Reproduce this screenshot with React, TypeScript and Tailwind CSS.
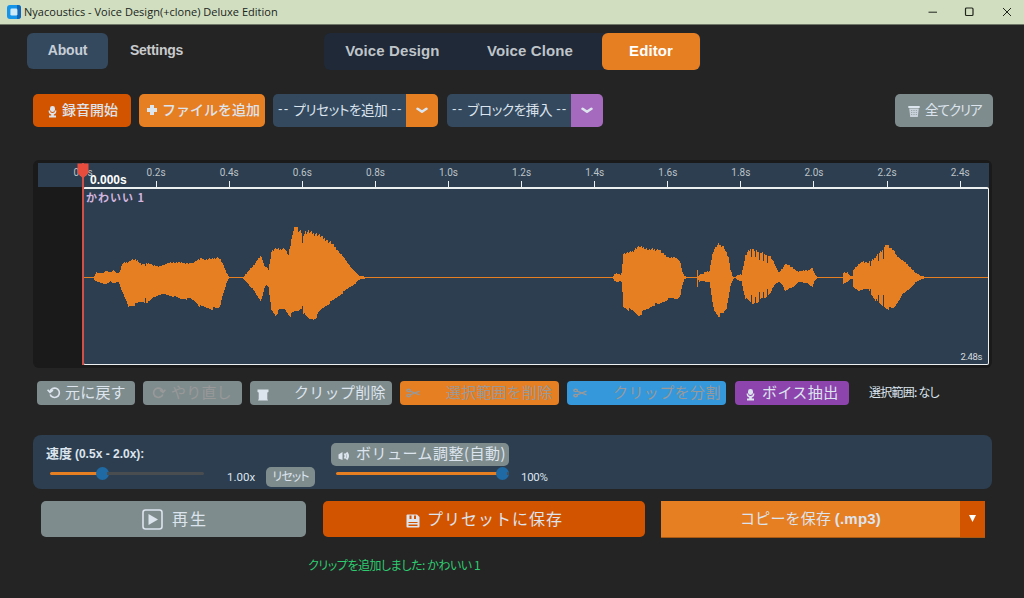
import type { ReactNode } from 'react';

type Sample = [x: number, up: number, down: number];

// Envelope of the clip: position inside the clip, height above and below the zero line
const envelope: Sample[] = [
  [0, 0, 0], [10, 0, 0], [11, 2, 2], [13, 5, 4], [16, 4, 5], [20, 5, 6], [23, 7, 6], [27, 5, 4], [30, 7, 6],
  [35, 4, 4], [36.5, 6, 8], [39, 14, 15], [42, 15, 22], [45, 16, 29], [50, 18, 27], [54, 17, 26], [58, 13, 24],
  [62, 14, 25], [66, 14, 24], [70, 12, 20], [75, 11, 17], [81, 13, 17], [87, 15, 18], [97, 15, 21], [107, 14, 21],
  [112, 16, 24], [117, 19, 29], [123, 18, 30], [129, 19, 31], [135, 20, 31], [137, 18, 27], [139, 14, 18],
  [141, 10, 12], [143, 5, 6], [146, 0, 0],
  [159, 0, 0], [163, 4, 4], [167, 9, 9], [171, 13, 14], [174, 18, 19], [177, 22, 23], [179, 18, 18], [181, 11, 10],
  [183, 10, 8], [185, 8, 10], [186, 13, 18], [188, 26, 32], [192, 29, 37], [197, 28, 32], [201, 29, 31],
  [205, 22, 36], [207, 32, 38], [209, 44, 36], [212, 52, 34], [215, 47, 33], [218, 45, 30], [219, 42, 33],
  [222, 45, 39], [226, 46, 42], [230, 44, 41], [234, 43, 38], [237, 42, 33], [242, 38, 28], [247, 35, 25],
  [252, 30, 21], [257, 24, 17], [262, 18, 13], [267, 11, 9], [272, 5, 6], [276, 2, 2], [284, 0.5, 0.5], [285, 0, 0],
  [529, 0, 0], [531, 4, 3], [534, 4, 5], [537, 3, 3], [538.5, 5, 5], [539, 14, 14], [540, 24, 29], [545, 25, 32],
  [550, 27, 34], [555, 31, 38], [560, 30, 34], [565, 28, 31], [570, 28, 27], [575, 28, 27], [580, 24, 24],
  [585, 20, 21], [590, 20, 21], [594, 19, 21], [597, 15, 17], [599, 5, 8], [601, 2, 1.5], [605, 0, 0],
  [613, 0, 0], [614, 8, 10], [615, 2, 2], [616, 3, 4], [620, 4, 3], [622, 6, 4], [626, 6, 5], [627, 13, 11],
  [629, 23, 25], [631, 29, 33], [635, 33, 38], [640, 31, 36], [643, 25, 31], [645, 20, 20], [647, 8, 8],
  [649, 2, 3], [651, 0, 0],
  [654, 2, 2], [656, 3, 3], [658, 3, 3], [660, 12, 13], [662, 22, 20], [665, 27, 23], [669, 29, 26], [673, 27, 25],
  [677, 25, 22], [682, 23, 20], [687, 21, 15], [691, 14, 8], [695, 5, 4], [699, 9, 7], [702, 14, 14],
  [706, 12, 11], [710, 9, 9], [714, 6, 5], [720, 7, 5], [725, 7, 6], [729, 10, 10], [731, 4, 4], [734, 0, 0],
  [759, 0, 0], [760, 5, 6], [764, 5, 4], [767, 1.5, 2], [769, 2, 2], [770, 8, 10], [775, 13, 13], [779, 16, 12],
  [785, 15, 12], [790, 18, 20], [794, 23, 24], [798, 26, 28], [803, 34, 30], [806, 31, 31], [810, 27, 31],
  [814, 21, 25], [818, 18, 18], [822, 15, 15], [827, 10, 10], [832, 5, 5], [837, 2, 2], [844, 0, 0], [906, 0, 0],
];

// Thin dips cut into the loud parts
const notches: Record<number, number> = {
  62: 0.8, 219: 0.82, 668: 0.7, 672: 0.75, 676: 0.65, 680: 0.7, 684: 0.65, 787: 0.75, 795: 0.72, 800: 0.6,
};

const wavePath = (): string => {
  let d = '';
  let i = 0;
  for (let x = 0; x < 906; x++) {
    while (i < envelope.length - 2 && envelope[i + 1][0] <= x) i++;
    const [x0, u0, d0] = envelope[i];
    const [x1, u1, d1] = envelope[i + 1];
    const t = (x - x0) / (x1 - x0);
    let up = u0 + (u1 - u0) * t;
    let down = d0 + (d1 - d0) * t;
    if (up < 0.5 && down < 0.5) continue;
    up *= (notches[x] ?? 1) * (1 + (((x * 37) % 11) - 5) * 0.008);
    down *= (notches[x] ?? 1) * (1 + (((x * 53) % 13) - 6) * 0.008);
    d += `M${x} ${(90.5 - up).toFixed(1)}h1V${(90.5 + down).toFixed(1)}h-1z`;
  }
  return d;
};

const ticks = ['0.0s', '0.2s', '0.4s', '0.6s', '0.8s', '1.0s', '1.2s', '1.4s', '1.6s', '1.8s', '2.0s', '2.2s', '2.4s'];

function MicIcon() {
  return (
    <svg width="9" height="12" viewBox="0 0 9 12" fill="currentColor" className="mt-[3px] shrink-0">
      <rect x="2" y="0" width="5" height="6" rx="2.4" />
      <path d="M0.6 4.5h1.2Q2.2 7 4.5 7T7.2 4.5h1.2Q8.4 8 5.8 8.4V9.6H8V11.6H1V9.6H3.2V8.4Q0.6 8 0.6 4.5z" />
    </svg>
  );
}

function TrashIcon() {
  return (
    <svg width="12" height="13" viewBox="0 0 12 13" fill="currentColor" className="mt-px shrink-0">
      <path d="M0.3 1h11.4v2H0.3z" />
      <path d="M1.2 3.4h9.6L9.8 12H2.2z" opacity="0.8" />
      <path d="M3.7 5v5.5M6 5v5.5M8.3 5v5.5" stroke="#7f8c8d" strokeWidth="0.8" strokeDasharray="1 1" />
    </svg>
  );
}

function BinIcon() {
  return (
    <svg width="12" height="12" viewBox="0 0 12 12" fill="currentColor" className="mt-[3px] shrink-0">
      <path d="M0.5 0.5h11v2.5l-1.2 0.6V10l0.7 1.5H1L1.7 10V3.6L0.5 3z" />
    </svg>
  );
}

function RotateIcon({ flip = false }: { flip?: boolean }) {
  return (
    <svg width="14" height="12" viewBox="0 0 14 12" fill="none" stroke="currentColor" strokeWidth="1.6" className={flip ? 'shrink-0 -scale-x-100' : 'shrink-0'}>
      <path d="M5.3 1.7A4.7 4.7 0 1 1 3.2 7.4" />
      <path d="M0.6 2.8L3 5.4L6 3.2M3 5.2Q3.2 2.6 5.6 1.6" />
    </svg>
  );
}

function ScissorsIcon() {
  return (
    <svg width="14" height="10" viewBox="0 0 14 10" fill="none" stroke="currentColor" strokeWidth="1.4" className="shrink-0">
      <ellipse cx="2.6" cy="2.4" rx="1.8" ry="1.2" />
      <ellipse cx="2.6" cy="7.6" rx="1.8" ry="1.2" />
      <path d="M4 3.2L13.5 6.8M4 6.8L13.5 3.2" />
    </svg>
  );
}

function Chevron() {
  return (
    <svg width="12" height="7" viewBox="0 0 12 7" fill="none" stroke="#dce4ee" strokeWidth="2.6" strokeLinecap="round" strokeLinejoin="round">
      <path d="M1.6 1.8L6 4.8L10.4 1.8" />
    </svg>
  );
}

function ComboBox({ label, width, accent }: { label: string; width: string; accent: string }) {
  return (
    <div className={`flex h-[33px] overflow-hidden rounded-[5px] ${width}`}>
      <div className="flex min-w-0 flex-1 gap-[4px] bg-[#34495e] pl-[5px] text-[13.5px] leading-[30px] whitespace-nowrap text-[#dce4ee]">
        <span className="font-['Liberation_Sans'] tracking-[1.2px]">--</span>
        <span className="tracking-[-0.35px] [font-feature-settings:'palt']">{label}</span>
        <span className="font-['Liberation_Sans'] tracking-[1.2px]">--</span>
      </div>
      <div className={`flex w-8 shrink-0 items-center justify-center ${accent}`}>
        <Chevron />
      </div>
    </div>
  );
}

function ToolButton({ icon, children, className }: { icon: ReactNode; children: string; className: string }) {
  return (
    <button className={`flex h-6 shrink-0 items-center rounded-[4px] text-[15px] leading-none whitespace-nowrap ${className}`}>
      {icon}
      <span className="pb-[4px]">{children}</span>
    </button>
  );
}

function TitleBar() {
  return (
    <div className="flex h-[25px] items-center border-b border-[#6f7769] bg-[#d1dfc0] pl-[7px] text-[#20241d]">
      <svg width="14" height="14" viewBox="0 0 14 14">
        <rect width="14" height="14" rx="3" fill="#1595ea" />
        <path d="M10 0h1a3 3 0 0 1 3 3v8a3 3 0 0 1-3 3h-1z" fill="#1266b5" />
        <rect x="3.4" y="3.6" width="7" height="7" rx="1.4" fill="#cfeaf7" />
      </svg>
      <span className="ml-[3px] font-['Open_Sans'] text-[11px] tracking-[0.02px] whitespace-nowrap">
        Nyacoustics - Voice Design(+clone) Deluxe Edition
      </span>
      <svg className="ml-auto mr-[12px]" width="84" height="10" viewBox="0 0 84 10" fill="none" stroke="#20241d">
        <path d="M0.5 5.2h8.5" />
        <rect x="37.5" y="1" width="7.5" height="7.5" rx="1" strokeWidth="1.2" />
        <path d="M75 1l8 8M83 1l-8 8" />
      </svg>
    </div>
  );
}

function Timeline() {
  return (
    <div className="ml-[33px] mt-[33px] h-[208px] w-[959px] rounded-[6px] bg-[#1a1a1a] pl-[5px] pt-[3px]">
      <div className="relative flex h-[202px] w-[951px] flex-col">
        <div className="flex h-[24px] bg-[#2c3e50] pl-[8.5px]">
          {ticks.map((tick, i) => (
            <div key={tick} className="flex w-[73.1px] shrink-0 flex-col items-center text-[10px] leading-[18px] text-[#bdc3c7]">
              <span className="h-[18px] pt-px font-[Roboto] text-[10px]">{tick}</span>
              {i > 0 && <span className="h-[6px] w-px bg-[#ecf0f1]" />}
            </div>
          ))}
        </div>
        <div className="relative ml-[45px] h-[178px] w-[906px] rounded-[2px] border border-t-2 border-[#ecf0f1] bg-[#2c3e50]">
          <svg className="absolute -left-px -top-[2px]" width="906" height="178" viewBox="0 0 906 178" fill="#e67e22" shapeRendering="crispEdges">
            <rect x="1" y="90" width="904" height="1" />
            <path d={wavePath()} />
          </svg>
          <span className="absolute left-[2px] top-px text-[11px] font-bold leading-[14px] tracking-[1px] whitespace-nowrap text-[#d2b4de]">かわいい 1</span>
          <span className="absolute bottom-px right-[6px] font-[Roboto] text-[9.5px] leading-[12px] tracking-[-0.4px] text-[#d5dbdf]">2.48s</span>
        </div>
        {/* Playhead */}
        <div className="absolute left-[44px] top-0 h-full w-[2px] bg-[#cf5048]" />
        <svg className="absolute left-[39px] top-0" width="12" height="16" viewBox="0 0 12 16">
          <path d="M0.5 0.5h11V10L6 15.5L0.5 10z" fill="#e74c3c" />
        </svg>
        <span className="absolute left-[52px] top-[10px] font-['Liberation_Sans'] text-[12px] font-bold leading-[15px] text-white">0.000s</span>
      </div>
    </div>
  );
}

function Slider({ className, fill }: { className: string; fill: string }) {
  return (
    <div className={`flex h-[14px] shrink-0 items-center ${className}`}>
      <div className={`h-[3px] rounded-l bg-[#e67e22] ${fill}`} />
      <div className="-mx-[2px] h-[13px] w-[13px] shrink-0 rounded-full bg-[#1f6aa5]" />
      <div className="h-[3px] flex-1 rounded-r bg-[#4a4d50]" />
    </div>
  );
}

export default function App() {
  return (
    <div className="h-[598px] w-[1024px] overflow-hidden bg-[#242424] font-['Noto_Sans_CJK_JP',sans-serif] text-[#dce4ee]">
      <TitleBar />

      {/* Menu and mode tabs */}
      <div className="flex pl-[27px] pt-[8px] font-['Liberation_Sans'] font-bold">
        <button className="h-[36px] w-[81px] rounded-[6px] bg-[#34495e] pb-px text-[14px] tracking-[-0.2px] text-[#c6ced7]">About</button>
        <button className="h-[35px] w-[97px] text-[14px] tracking-[-0.3px] text-[#c8cacc]">Settings</button>
        <div className="ml-[119px] flex h-[37px] w-[377px] rounded-[6px] bg-[#1f2937] text-[15px] tracking-[0.1px] text-[#bfc4c9]">
          <button className="w-[137px]">Voice Design</button>
          <button className="w-[138px]">Voice Clone</button>
          <button className="ml-[3px] w-[98px] rounded-[6px] bg-[#e67e22] text-white">Editor</button>
        </div>
      </div>

      {/* Source row */}
      <div className="mt-[24px] flex pl-[33px]">
        <button className="flex h-[33px] w-[98px] items-center gap-[5px] rounded-[5px] bg-[#d35400] pl-[15px] text-[14px] font-medium whitespace-nowrap">
          <MicIcon />
          <span className="pb-[3px]">録音開始</span>
        </button>
        <button className="ml-[8px] flex h-[33px] w-[126px] items-center gap-[4px] rounded-[5px] bg-[#e67e22] pl-[7px] text-[14px] font-medium whitespace-nowrap">
          <svg width="12" height="12" viewBox="0 0 12 12" className="mb-px shrink-0">
            <path d="M6 1v10M1 6h10" stroke="currentColor" strokeWidth="4" />
          </svg>
          <span className="pb-[3px]">ファイルを追加</span>
        </button>
        <div className="ml-[8px]">
          <ComboBox label="プリセットを追加" width="w-[165px]" accent="bg-[#e67e22]" />
        </div>
        <div className="ml-[9px]">
          <ComboBox label="ブロックを挿入" width="w-[156px]" accent="bg-[#a569bd]" />
        </div>
        <button className="ml-[292px] flex h-[33px] w-[98px] items-center gap-[5px] rounded-[5px] bg-[#7f8c8d] pl-[13px] text-[13.5px] whitespace-nowrap">
          <TrashIcon />
          <span className="pb-[3px] tracking-[-1px] [font-feature-settings:'palt']">全てクリア</span>
        </button>
      </div>

      <Timeline />

      {/* Edit row */}
      <div className="mt-[13px] flex items-center pl-[37px]">
        <ToolButton icon={<RotateIcon />} className="w-[98px] gap-[4px] bg-[#7f8c8d] pl-[10px] tracking-[0.2px]">元に戻す</ToolButton>
        <ToolButton icon={<RotateIcon flip />} className="ml-[8px] w-[99px] gap-[5px] bg-[#7f8c8d] pl-[9px] tracking-[0.2px] text-[#999999]">やり直し</ToolButton>
        <ToolButton icon={<BinIcon />} className="ml-[8px] w-[142px] gap-[25px] bg-[#7f8c8d] pl-[7px] tracking-[0.3px]">クリップ削除</ToolButton>
        <ToolButton icon={<ScissorsIcon />} className="ml-[8px] w-[159px] gap-[26px] bg-[#e67e22] pl-[6px] tracking-[0.2px] text-[#999999]">選択範囲を削除</ToolButton>
        <ToolButton icon={<ScissorsIcon />} className="ml-[8px] w-[159px] gap-[26px] bg-[#3498db] pl-[6px] tracking-[0.4px] text-[#999999]">クリップを分割</ToolButton>
        <ToolButton icon={<MicIcon />} className="ml-[9px] w-[114px] gap-[7px] bg-[#8e44ad] pl-[11px] tracking-[0.4px]">ボイス抽出</ToolButton>
        <span className="ml-[20px] pb-[2px] text-[12px] leading-[18px] tracking-[-0.75px] whitespace-nowrap [font-feature-settings:'palt']">選択範囲: なし</span>
      </div>

      {/* Speed and volume */}
      <div className="ml-[33px] mt-[30px] flex h-[54px] w-[959px] rounded-[8px] bg-[#2c3e50]">
        <div className="flex w-[298px] flex-col pl-[13px] pt-[9px]">
          <span className="text-[13px] font-bold leading-[18px] whitespace-nowrap">
            速度 <span className="font-['Liberation_Sans'] text-[12px]">(0.5x - 2.0x):</span>
          </span>
          <div className="flex">
            <Slider className="ml-[4px] mt-[3px] w-[154px]" fill="w-[48px]" />
            <span className="ml-[23px] mt-[6px] w-[39px] font-[Roboto] text-[11.5px] leading-[16px]">1.00x</span>
            <button className="mt-[4px] h-[20px] w-[49px] rounded-[5px] bg-[#7f8c8d] pb-[3px] text-[12px] leading-[17px] tracking-[-0.9px] [font-feature-settings:'palt']">リセット</button>
          </div>
        </div>
        <div className="flex flex-col pt-[8px]">
          <button className="flex h-[23px] w-[178px] items-center gap-[6px] rounded-[5px] bg-[#7f8c8d] pl-[7px] text-[15px] leading-none whitespace-nowrap">
            <svg width="12" height="10" viewBox="0 0 12 10" fill="currentColor" className="mt-[3px] shrink-0">
              <path d="M0.5 3.5L4.5 1v8L0.5 7.5z" />
              <path d="M6.5 2.5q2 2.5 0 5M8.5 1.5q3 3.5 0 7" fill="none" stroke="currentColor" strokeWidth="2" />
            </svg>
            <span className="pb-[4px] tracking-[0.5px]">ボリューム調整(自動)</span>
          </button>
          <div className="flex">
            <Slider className="ml-[5px] w-[173px]" fill="w-[162px]" />
            <span className="ml-[12px] mt-[3px] font-[Roboto] text-[11.5px] leading-[16px] tracking-[-0.3px]">100%</span>
          </div>
        </div>
      </div>

      {/* Output row */}
      <div className="mt-[12px] flex pl-[41px]">
        <button className="flex h-[36px] w-[265px] items-center gap-[9px] rounded-[5px] bg-[#7f8c8d] pl-[101px] text-[16px] tracking-[2px] whitespace-nowrap">
          <svg width="21" height="21" viewBox="0 0 21 21" className="shrink-0">
            <rect x="1" y="1" width="19" height="19" rx="2.5" fill="none" stroke="currentColor" strokeWidth="1.6" />
            <path d="M6.5 5v11L16 10.5z" fill="currentColor" />
          </svg>
          <span className="pb-[3px]">再生</span>
        </button>
        <button className="ml-[17px] flex h-[36px] w-[322px] items-center gap-[6px] rounded-[5px] bg-[#d35400] pl-[82px] text-[16px] tracking-[1px] whitespace-nowrap">
          <svg width="16" height="16" viewBox="0 0 16 16" className="mt-[3px] shrink-0">
            <path d="M2.5 1.500h9.500L14.500 4V13.500q0 1-1 1H2.500q-1 0-1-1V2.500q0-1 1-1z" fill="currentColor" />
            <path d="M4.500 2.500h2v3.500h-2zM9 2.500h2v3.500h-2zM3.500 9h9v1h-9zM3.500 11.500h9v1.500h-9z" fill="#d35400" />
          </svg>
          <span className="pb-[3px]">プリセットに保存</span>
        </button>
        <div className="ml-[16px] flex h-[37px] border-b border-[#a85a14]">
          <button className="w-[299px] bg-[#e67e22] text-[15px] tracking-[0.2px] whitespace-nowrap">
            コピーを保存 <span className="font-['Liberation_Sans'] font-bold">(.mp3)</span>
          </button>
          <button className="flex w-[25px] items-center justify-center bg-[#d35400] pb-[2px]">
            <svg width="7" height="7" viewBox="0 0 7 7">
              <path d="M0 0h7L3.5 7z" fill="#fff" />
            </svg>
          </button>
        </div>
      </div>

      <div className="mt-[17px] pl-[308px] text-[12px] leading-[20px] tracking-[-0.45px] text-[#2ecc71] [font-feature-settings:'palt']">
        クリップを追加しました: かわいい 1
      </div>
    </div>
  );
}
